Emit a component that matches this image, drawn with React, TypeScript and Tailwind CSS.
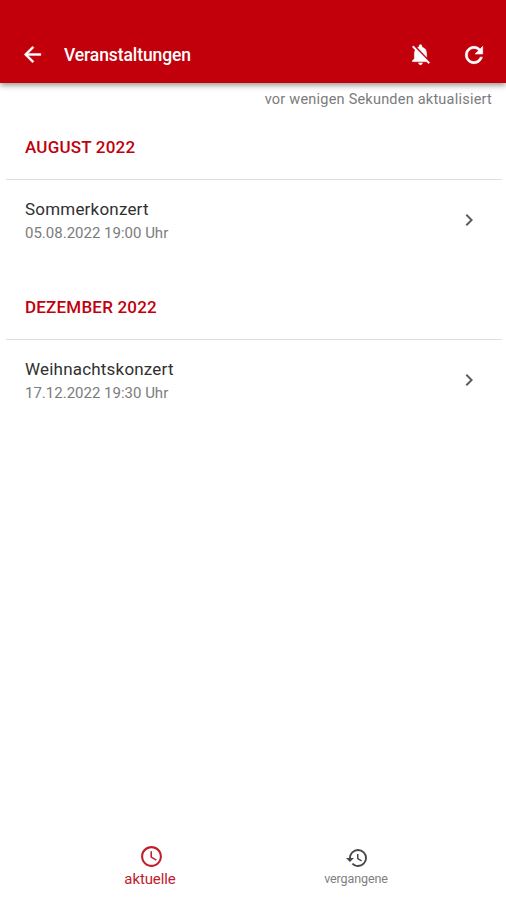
import { MdAccessTime, MdChevronRight, MdHistory } from "react-icons/md";

type EventItem = { title: string; date: string };

function BarIcon({ d, size, weight, className = "" }: { d: string; size: number; weight: number; className?: string }) {
  return (
    <svg
      viewBox="0 0 24 24"
      width={size}
      height={size}
      fill="currentColor"
      stroke="currentColor"
      strokeWidth={weight}
      className={className}
    >
      <path d={d} />
    </svg>
  );
}

const BACK = "M20 11H7.83l5.59-5.59L12 4l-8 8 8 8 1.41-1.41L7.83 13H20v-2z";
const BELL_OFF =
  "M20 18.69L7.84 6.14 5.27 3.49 4 4.76l2.8 2.8v.01c-.52.99-.8 2.16-.8 3.42v5l-2 2v1h13.73l2 2L21 19.72l-1-1.03zM12 22c1.11 0 2-.89 2-2h-4c0 1.11.89 2 2 2zm6-7.32V11c0-3.08-1.64-5.64-4.5-6.32V4c0-.83-.67-1.5-1.5-1.5s-1.5.67-1.5 1.5v.68c-.15.03-.29.08-.42.12-.1.03-.2.07-.3.11h-.01c-.01 0-.01 0-.02.01-.23.09-.46.2-.68.31 0 0-.01 0-.01.01L18 14.68z";
const REFRESH =
  "M17.65 6.35C16.2 4.9 14.21 4 12 4c-4.42 0-7.99 3.58-7.99 8s3.57 8 7.99 8c3.73 0 6.84-2.55 7.73-6h-2.08c-.82 2.33-3.04 4-5.65 4-3.31 0-6-2.69-6-6s2.69-6 6-6c1.66 0 3.14.69 4.22 1.78L13 11h7V4l-2.35 2.35z";

function Month({ name, event }: { name: string; event: EventItem }) {
  return (
    <section className="h-40">
      <h2 className="mr-1 ml-1.5 flex h-16 items-center border-b border-[#dedede] pt-px pl-[19px] text-[17px] font-medium tracking-[0.2px] text-[#c0000c]">
        <span className="whitespace-nowrap">{name}</span>
      </h2>
      <div className="flex h-[82px] items-center justify-between pr-[25px] pl-[25px]">
        <div className="whitespace-nowrap">
          <div className="text-[17px] leading-6 tracking-[0.2px] text-[#303030]">{event.title}</div>
          <div className="text-[15px] leading-6 text-[#7c7c7c]">{event.date}</div>
        </div>
        <MdChevronRight size={24} className="mb-[3px] text-[#5c5c5c]" />
      </div>
    </section>
  );
}

export default function App() {
  return (
    <div className="flex h-[900px] w-[506px] flex-col overflow-hidden bg-white font-['Roboto',sans-serif]">
      <header className="flex h-[83px] shrink-0 items-end bg-[#c2000b] pr-[19px] pb-[15px] pl-5 text-white shadow-[0_2px_6px_rgba(0,0,0,0.45)]">
        <div className="flex h-[27px] w-full items-center">
          <BarIcon d={BACK} size={25} weight={0.4} />
          <h1 className="ml-[19px] pt-px text-[17.5px] font-medium tracking-[-0.1px]">Veranstaltungen</h1>
          <BarIcon d={BELL_OFF} size={25} weight={0.2} className="ml-auto" />
          <BarIcon d={REFRESH} size={26} weight={0.6} className="ml-7" />
        </div>
      </header>
      <main className="flex-1">
        <p className="flex h-[33px] items-center justify-end pt-px pr-[14px] text-[14.5px] tracking-[0.22px] text-[#7b7b7b]">
          vor wenigen Sekunden aktualisiert
        </p>
        <Month name="AUGUST 2022" event={{ title: "Sommerkonzert", date: "05.08.2022 19:00 Uhr" }} />
        <Month name="DEZEMBER 2022" event={{ title: "Weihnachtskonzert", date: "17.12.2022 19:30 Uhr" }} />
      </main>
      <nav className="flex h-[60px] shrink-0 justify-center">
        <button className="flex w-[206px] flex-col items-center pt-1 text-[#c0202b]">
          <span className="pl-0.5">
            <MdAccessTime size={25} />
          </span>
          <span className="text-[15px] leading-5 tracking-[-0.1px]">aktuelle</span>
        </button>
        <button className="flex w-[206px] flex-col items-center pt-[6px] text-[#484848]">
          <span className="pl-0.5">
            <MdHistory size={24} />
          </span>
          <span className="text-[12.5px] leading-[18px] tracking-[-0.1px] text-[#808080]">vergangene</span>
        </button>
      </nav>
    </div>
  );
}
